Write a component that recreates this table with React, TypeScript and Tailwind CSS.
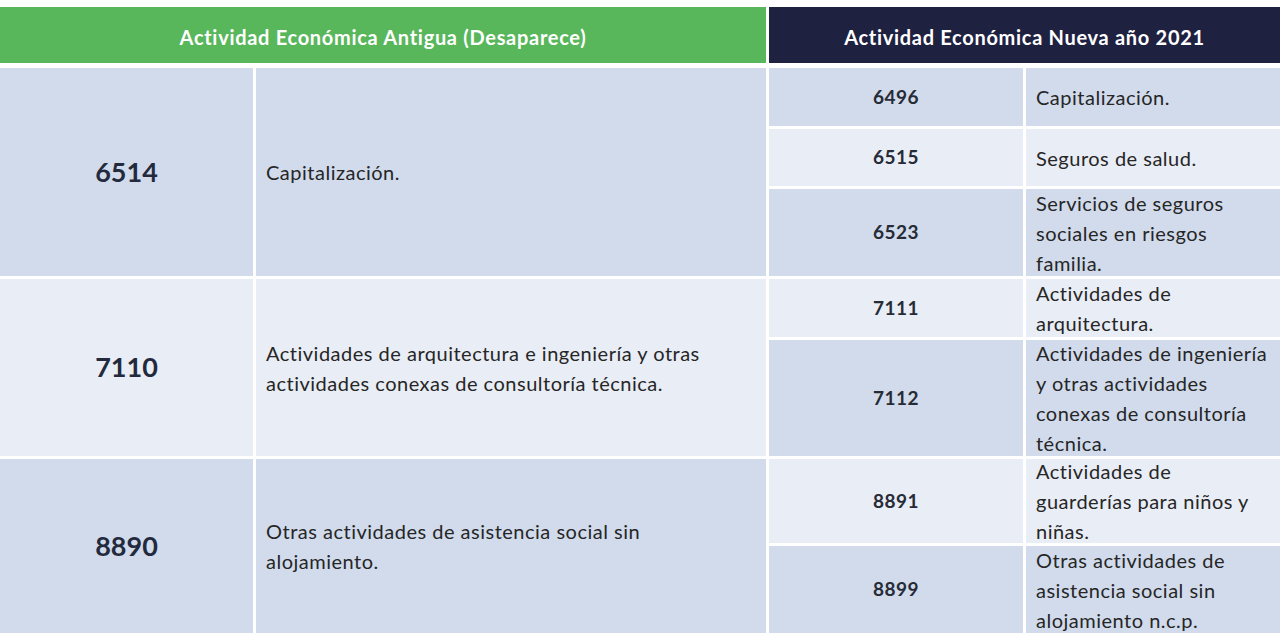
import React from 'react';

type Sub = { code: string; lines: string[]; h: string; dark: boolean };
type Group = { code: string; lines: string[]; h: string; dark: boolean; subs: Sub[] };

const groups: Group[] = [
  {
    code: '6514',
    lines: ['Capitalización.'],
    h: 'h-[208px]',
    dark: true,
    subs: [
      { code: '6496', lines: ['Capitalización.'], h: 'h-[58px]', dark: true },
      { code: '6515', lines: ['Seguros de salud.'], h: 'h-[57px]', dark: false },
      { code: '6523', lines: ['Servicios de seguros', 'sociales en riesgos', 'familia.'], h: 'h-[87px]', dark: true },
    ],
  },
  {
    code: '7110',
    lines: ['Actividades de arquitectura e ingeniería y otras', 'actividades conexas de consultoría técnica.'],
    h: 'h-[177px]',
    dark: false,
    subs: [
      { code: '7111', lines: ['Actividades de', 'arquitectura.'], h: 'h-[58px]', dark: false },
      {
        code: '7112',
        lines: ['Actividades de ingeniería', 'y otras actividades', 'conexas de consultoría', 'técnica.'],
        h: 'h-[116px]',
        dark: true,
      },
    ],
  },
  {
    code: '8890',
    lines: ['Otras actividades de asistencia social sin', 'alojamiento.'],
    h: 'h-[174px]',
    dark: true,
    subs: [
      { code: '8891', lines: ['Actividades de', 'guarderías para niños y', 'niñas.'], h: 'h-[84px]', dark: false },
      { code: '8899', lines: ['Otras actividades de', 'asistencia social sin', 'alojamiento n.c.p.'], h: 'h-[87px]', dark: true },
    ],
  },
];

const Lines: React.FC<{ lines: string[] }> = ({ lines }) => (
  <div className="leading-[30px]">
    {lines.map((l) => (
      <div key={l} className="whitespace-nowrap">
        {l}
      </div>
    ))}
  </div>
);

const App: React.FC = () => {
  return (
    <div className="w-[1280px] h-[641px] bg-white pt-[7px] font-['Lato',sans-serif] text-[#262626] overflow-hidden">
      <div className="flex gap-[3px] h-[56px] text-white font-bold text-[20px] tracking-[0.7px]">
        <div className="w-[766px] bg-[#58b65b] flex items-center justify-center pt-[3px]">
          Actividad Económica Antigua (Desaparece)
        </div>
        <div className="flex-1 bg-[#1f2141] flex items-center justify-center pt-[3px]">
          Actividad Económica Nueva año 2021
        </div>
      </div>

      <div className="mt-[5px] flex flex-col gap-[3px]">
        {groups.map((g) => (
          <div key={g.code} className={`flex gap-[3px] ${g.h}`}>
            <div
              className={`w-[253px] flex items-center justify-center text-[27px] font-bold text-[#232a3d] ${
                g.dark ? 'bg-[#d1dbec]' : 'bg-[#e9edf5]'
              }`}
            >
              {g.code}
            </div>
            <div
              className={`w-[510px] flex items-center pl-[10px] text-[20px] tracking-[0.5px] ${
                g.dark ? 'bg-[#d1dbec]' : 'bg-[#e9edf5]'
              }`}
            >
              <Lines lines={g.lines} />
            </div>
            <div className="flex-1 flex flex-col gap-[3px]">
              {g.subs.map((s) => (
                <div key={s.code} className={`flex gap-[3px] ${s.h}`}>
                  <div
                    className={`w-[254px] flex items-center justify-center text-[19px] tracking-[0.5px] font-bold text-[#262b36] ${
                      s.dark ? 'bg-[#d1dbec]' : 'bg-[#e9edf5]'
                    }`}
                  >
                    {s.code}
                  </div>
                  <div
                    className={`flex-1 flex items-center pl-[10px] text-[20px] tracking-[0.5px] ${
                      s.dark ? 'bg-[#d1dbec]' : 'bg-[#e9edf5]'
                    }`}
                  >
                    <Lines lines={s.lines} />
                  </div>
                </div>
              ))}
            </div>
          </div>
        ))}
      </div>
    </div>
  );
};

export default App;
